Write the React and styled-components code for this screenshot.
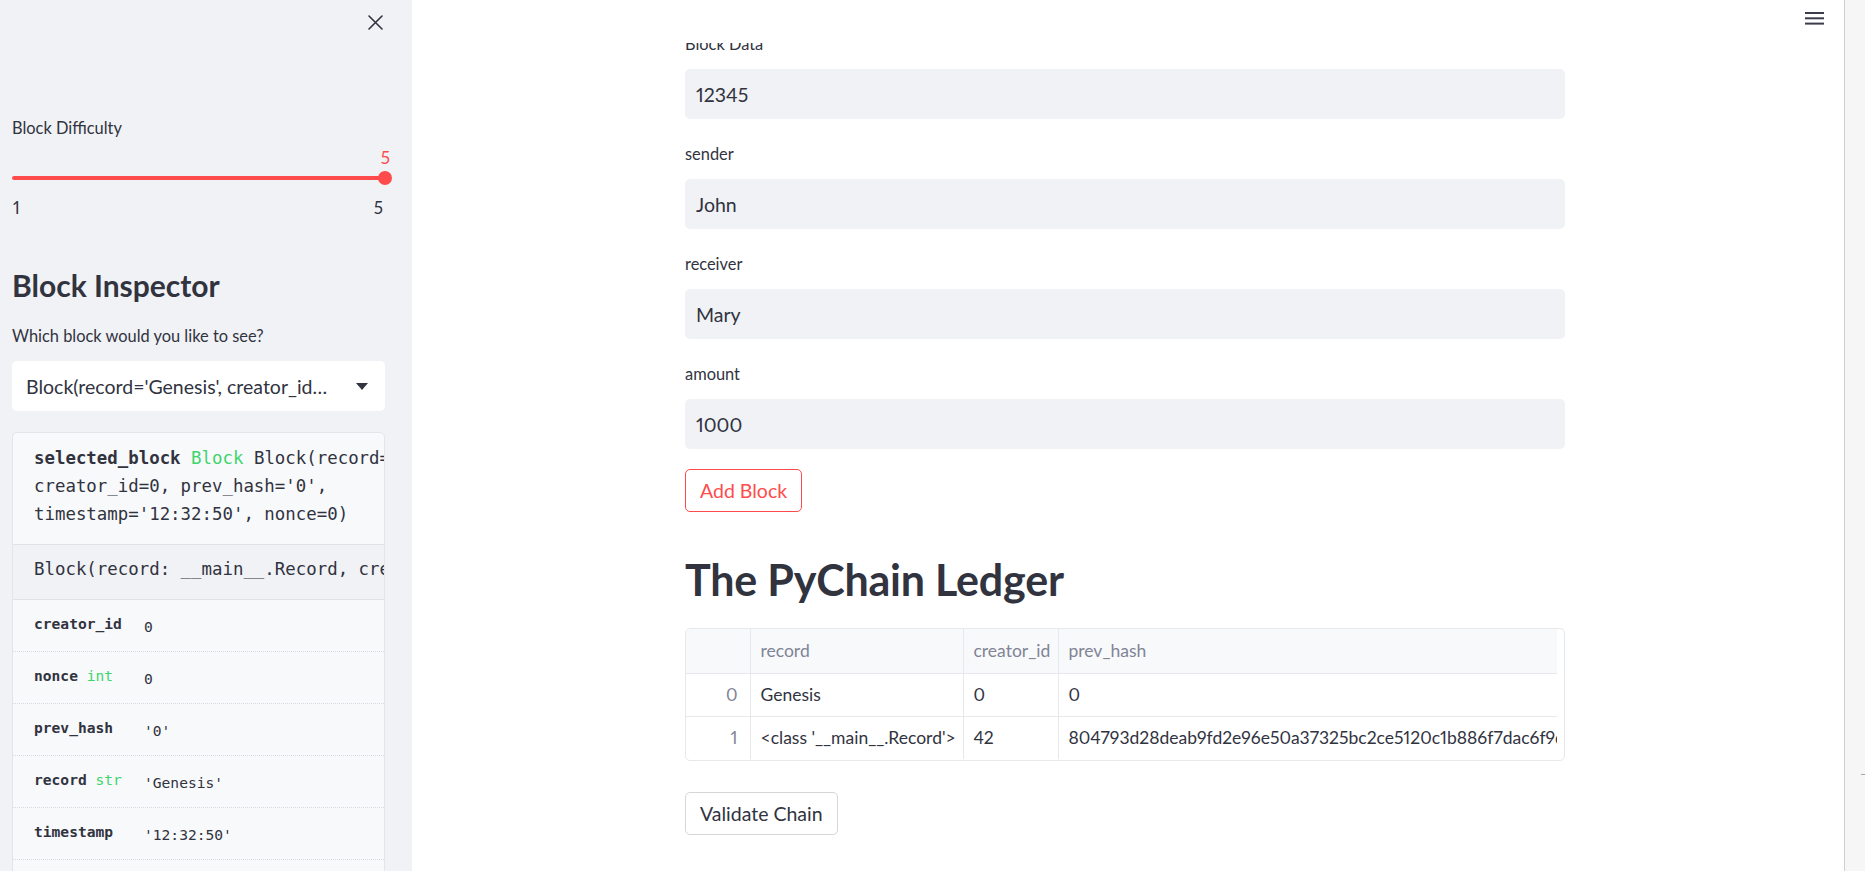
import React from "react";
import styled, { createGlobalStyle } from "styled-components";

const SANS = `"Lato", "Noto Sans", sans-serif`;
const MONO = `"DejaVu Sans Mono", "Liberation Mono", monospace`;
const TEXT = "#31333f";
const RED = "#ff4b4b";
const GREEN = "#3dd56d";

const Global = createGlobalStyle`
  html, body { margin: 0; padding: 0; height: 100%; overflow: hidden; }
  body { font-family: ${SANS}; color: ${TEXT}; background: #fff; font-variant-numeric: proportional-nums; }
  * { box-sizing: border-box; }
`;

const Shell = styled.div`
  display: flex;
  width: 1865px;
  height: 871px;
  overflow: hidden;
`;

/* ---------- Sidebar ---------- */
const Sidebar = styled.aside`
  width: 412px;
  flex-shrink: 0;
  background: #f0f2f6;
  padding: 0 27px 0 12px;
  display: flex;
  flex-direction: column;
  overflow: hidden;
  & > * { flex-shrink: 0; }
`;

const CloseRow = styled.div`
  display: flex;
  justify-content: flex-end;
  height: 46px;
  padding-top: 15px;
  padding-right: 2px;
`;

const SideLabel = styled.div`
  font-size: 16.4px;
  line-height: 24px;
  margin-top: 70px;
`;

const SliderWrap = styled.div`
  height: 80px;
  display: flex;
  flex-direction: column;
`;

const SliderValue = styled.div`
  align-self: flex-end;
  color: ${RED};
  font-size: 17px;
  line-height: 22px;
  margin-top: 7px;
  margin-right: -5px;
`;

const Track = styled.div`
  position: relative;
  height: 4px;
  border-radius: 2px;
  background: ${RED};
  margin-top: 7px;
`;

const Thumb = styled.div`
  position: absolute;
  right: -7px;
  top: -5px;
  width: 14px;
  height: 14px;
  border-radius: 50%;
  background: ${RED};
`;

const Ticks = styled.div`
  display: flex;
  justify-content: space-between;
  font-size: 17px;
  line-height: 22px;
  margin-top: 17px;
  padding: 0 2px 0 1px;
`;

const SideHeading = styled.h2`
  font-size: 30px;
  font-weight: 700;
  line-height: 40px;
  margin: 45px 0 0 0;
`;

const SideText = styled.p`
  font-size: 16.4px;
  line-height: 24px;
  margin: 19px 0 0 0;
`;

const Select = styled.div`
  margin-top: 13px;
  height: 50px;
  background: #fff;
  border-radius: 5px;
  display: flex;
  align-items: center;
  padding: 0 17px 0 14px;
  gap: 26px;
`;

const SelectText = styled.span`
  flex: 1;
  min-width: 0;
  font-size: 19.5px;
  white-space: nowrap;
  overflow: hidden;
  text-overflow: ellipsis;
`;

const HelpBox = styled.div`
  margin-top: 21px;
  background: #f8f9fb;
  border: 1px solid #e3e5ea;
  border-radius: 5px;
  overflow: hidden;
`;

const HelpTop = styled.div`
  font-family: ${MONO};
  font-size: 17.4px;
  line-height: 28px;
  padding: 11px 0 16px 21px;
  white-space: pre;
`;

const Strong = styled.b`
  font-weight: 700;
`;

const Green = styled.span`
  color: ${GREEN};
`;

const DocRow = styled.div`
  background: #f0f2f6;
  border-top: 1px solid #e0e2e7;
  border-bottom: 1px solid #e0e2e7;
  font-family: ${MONO};
  font-size: 17.4px;
  line-height: 28px;
  height: 56px;
  padding: 10px 0 0 21px;
  white-space: pre;
`;

const Member = styled.div`
  display: grid;
  grid-template-columns: 112px 1fr;
  height: 52px;
  border-bottom: 1px dotted #d9dbe0;
`;

const MemberKey = styled.div`
  font-family: ${MONO};
  font-weight: 700;
  font-size: 14.6px;
  padding: 15px 0 0 21px;
  white-space: nowrap;
`;

const MemberVal = styled.div`
  font-family: ${MONO};
  font-size: 14.6px;
  padding: 18px 0 0 19px;
  white-space: nowrap;
`;

const TypeTag = styled.span`
  color: ${GREEN};
  font-weight: 400;
`;

/* ---------- Main ---------- */
const Main = styled.main`
  position: relative;
  flex: 1;
  min-width: 0;
  background: #fff;
  padding-right: 6px;
  overflow: hidden;
`;

const Header = styled.header`
  position: absolute;
  top: 0;
  left: 0;
  right: 0;
  height: 43px;
  background: #fff;
  display: flex;
  justify-content: flex-end;
  padding: 11px 20px 0 0;
  z-index: 2;
`;

const Content = styled.div`
  width: 880px;
  margin: 0 auto;
  padding-top: 29px;
  display: flex;
  flex-direction: column;
`;

const Field = styled.div`
  display: flex;
  flex-direction: column;
  margin-bottom: 20px;
`;

const FieldLabel = styled.label`
  height: 30px;
  line-height: 30px;
  font-size: 16.4px;
  margin-bottom: 10px;
`;

const Input = styled.div`
  height: 50px;
  background: #f0f2f6;
  border-radius: 5px;
  display: flex;
  align-items: center;
  padding: 0 11px;
  font-size: 19.5px;
`;

const Button = styled.button`
  align-self: flex-start;
  height: 43px;
  padding: 0 14px;
  border-radius: 5px;
  background: #fff;
  font-family: ${SANS};
  font-size: 19.5px;
  border: 1px solid ${(p) => (p.$primary ? RED : "#d5d6d9")};
  color: ${(p) => (p.$primary ? RED : TEXT)};
`;

const Title = styled.h1`
  font-size: 43px;
  font-weight: 700;
  line-height: 56px;
  margin: 40px 0 0 0;
  letter-spacing: -0.2px;
`;

const TableBox = styled.div`
  margin-top: 20px;
  border: 1px solid #e6e8ec;
  border-radius: 5px;
  height: 133px;
  overflow: hidden;
  padding-right: 7px;
`;

const Table = styled.table`
  border-collapse: collapse;
  table-layout: fixed;
  width: 100%;
  font-size: 17.5px;
`;

const Th = styled.th`
  height: 44px;
  background: #f8f9fb;
  color: #808495;
  font-weight: 400;
  text-align: left;
  padding: 0 10px;
  border-bottom: 1px solid #e6e8ec;
  border-right: 1px solid #e6e8ec;
  white-space: nowrap;
  overflow: hidden;
  &:last-child { border-right: none; }
`;

const Td = styled.td`
  height: 43px;
  padding: 0 10px;
  border-right: 1px solid #e6e8ec;
  border-bottom: ${(p) => (p.$last ? "none" : "1px solid #e6e8ec")};
  white-space: nowrap;
  overflow: hidden;
  color: ${(p) => (p.$index ? "#808495" : TEXT)};
  text-align: ${(p) => (p.$index ? "right" : "left")};
  padding-right: ${(p) => (p.$index ? "12px" : "10px")};
  &:last-child { border-right: none; }
`;

const ValidateWrap = styled.div`
  margin-top: 31px;
  display: flex;
`;

const Scrollbar = styled.div`
  width: 21px;
  flex-shrink: 0;
  background: #f6f6f6;
  border-left: 1px solid #cfcfcf;
  display: flex;
  flex-direction: column;
  align-items: flex-end;
  padding-top: 774px;
`;

const ScrollMark = styled.div`
  width: 4px;
  height: 1px;
  background: #a8a8a8;
`;

const CloseIcon = () => (
  <svg width="15" height="15" viewBox="0 0 15 15">
    <path d="M1 1 L14 14 M14 1 L1 14" stroke={TEXT} strokeWidth="1.6" strokeLinecap="round" />
  </svg>
);

const Hamburger = () => (
  <svg width="19" height="14" viewBox="0 0 19 14">
    <rect x="0" y="1" width="19" height="2" fill="#3b3d4c" />
    <rect x="0" y="6.3" width="19" height="2" fill="#3b3d4c" />
    <rect x="0" y="11.6" width="19" height="2" fill="#3b3d4c" />
  </svg>
);

const Caret = () => (
  <svg width="12" height="7" viewBox="0 0 12 7">
    <path d="M0 0 L12 0 L6 7 Z" fill={TEXT} />
  </svg>
);

const members = [
  { k: "creator_id", v: "0" },
  { k: "nonce", t: "int", v: "0" },
  { k: "prev_hash", v: "'0'" },
  { k: "record", t: "str", v: "'Genesis'" },
  { k: "timestamp", v: "'12:32:50'" },
  { k: "", v: "" },
];

const fields = [
  { label: "Block Data", value: "12345" },
  { label: "sender", value: "John" },
  { label: "receiver", value: "Mary" },
  { label: "amount", value: "1000" },
];

const rows = [
  { i: 0, record: "Genesis", creator: "0", hash: "0" },
  {
    i: 1,
    record: "<class '__main__.Record'>",
    creator: "42",
    hash: "804793d28deab9fd2e96e50a37325bc2ce5120c1b886f7dac6f9d69bfa3e1c07",
  },
];

export default function App() {
  return (
    <>
      <Global />
      <Shell>
        <Sidebar>
          <CloseRow>
            <CloseIcon />
          </CloseRow>
          <SideLabel>Block Difficulty</SideLabel>
          <SliderWrap>
            <SliderValue>5</SliderValue>
            <Track>
              <Thumb />
            </Track>
            <Ticks>
              <span>1</span>
              <span>5</span>
            </Ticks>
          </SliderWrap>
          <SideHeading>Block Inspector</SideHeading>
          <SideText>Which block would you like to see?</SideText>
          <Select>
            <SelectText>Block(record='Genesis', creator_id=0, prev_hash='0', timestamp='12:32:50', nonce=0)</SelectText>
            <Caret />
          </Select>
          <HelpBox>
            <HelpTop>
              <Strong>selected_block</Strong> <Green>Block</Green> Block(record='Genesis',{"\n"}creator_id=0, prev_hash='0',{"\n"}timestamp='12:32:50', nonce=0)
            </HelpTop>
            <DocRow>Block(record: __main__.Record, creator_id: int, prev_hash: str = '0')</DocRow>
            {members.map((m, i) => (
              <Member key={i}>
                <MemberKey>
                  {m.k}
                  {m.t && <TypeTag> {m.t}</TypeTag>}
                </MemberKey>
                <MemberVal>{m.v}</MemberVal>
              </Member>
            ))}
          </HelpBox>
        </Sidebar>
        <Main>
          <Header>
            <Hamburger />
          </Header>
          <Content>
            {fields.map((f) => (
              <Field key={f.label}>
                <FieldLabel>{f.label}</FieldLabel>
                <Input>{f.value}</Input>
              </Field>
            ))}
            <Button $primary>Add Block</Button>
            <Title>The PyChain Ledger</Title>
            <TableBox>
              <Table>
                <colgroup>
                  <col style={{ width: 64 }} />
                  <col style={{ width: 213 }} />
                  <col style={{ width: 95 }} />
                  <col />
                </colgroup>
                <thead>
                  <tr>
                    <Th />
                    <Th>record</Th>
                    <Th>creator_id</Th>
                    <Th>prev_hash</Th>
                  </tr>
                </thead>
                <tbody>
                  {rows.map((r, idx) => (
                    <tr key={r.i}>
                      <Td $index $last={idx === rows.length - 1}>{r.i}</Td>
                      <Td $last={idx === rows.length - 1}>{r.record}</Td>
                      <Td $last={idx === rows.length - 1}>{r.creator}</Td>
                      <Td $last={idx === rows.length - 1}>{r.hash}</Td>
                    </tr>
                  ))}
                </tbody>
              </Table>
            </TableBox>
            <ValidateWrap>
              <Button>Validate Chain</Button>
            </ValidateWrap>
          </Content>
        </Main>
        <Scrollbar>
          <ScrollMark />
        </Scrollbar>
      </Shell>
    </>
  );
}
